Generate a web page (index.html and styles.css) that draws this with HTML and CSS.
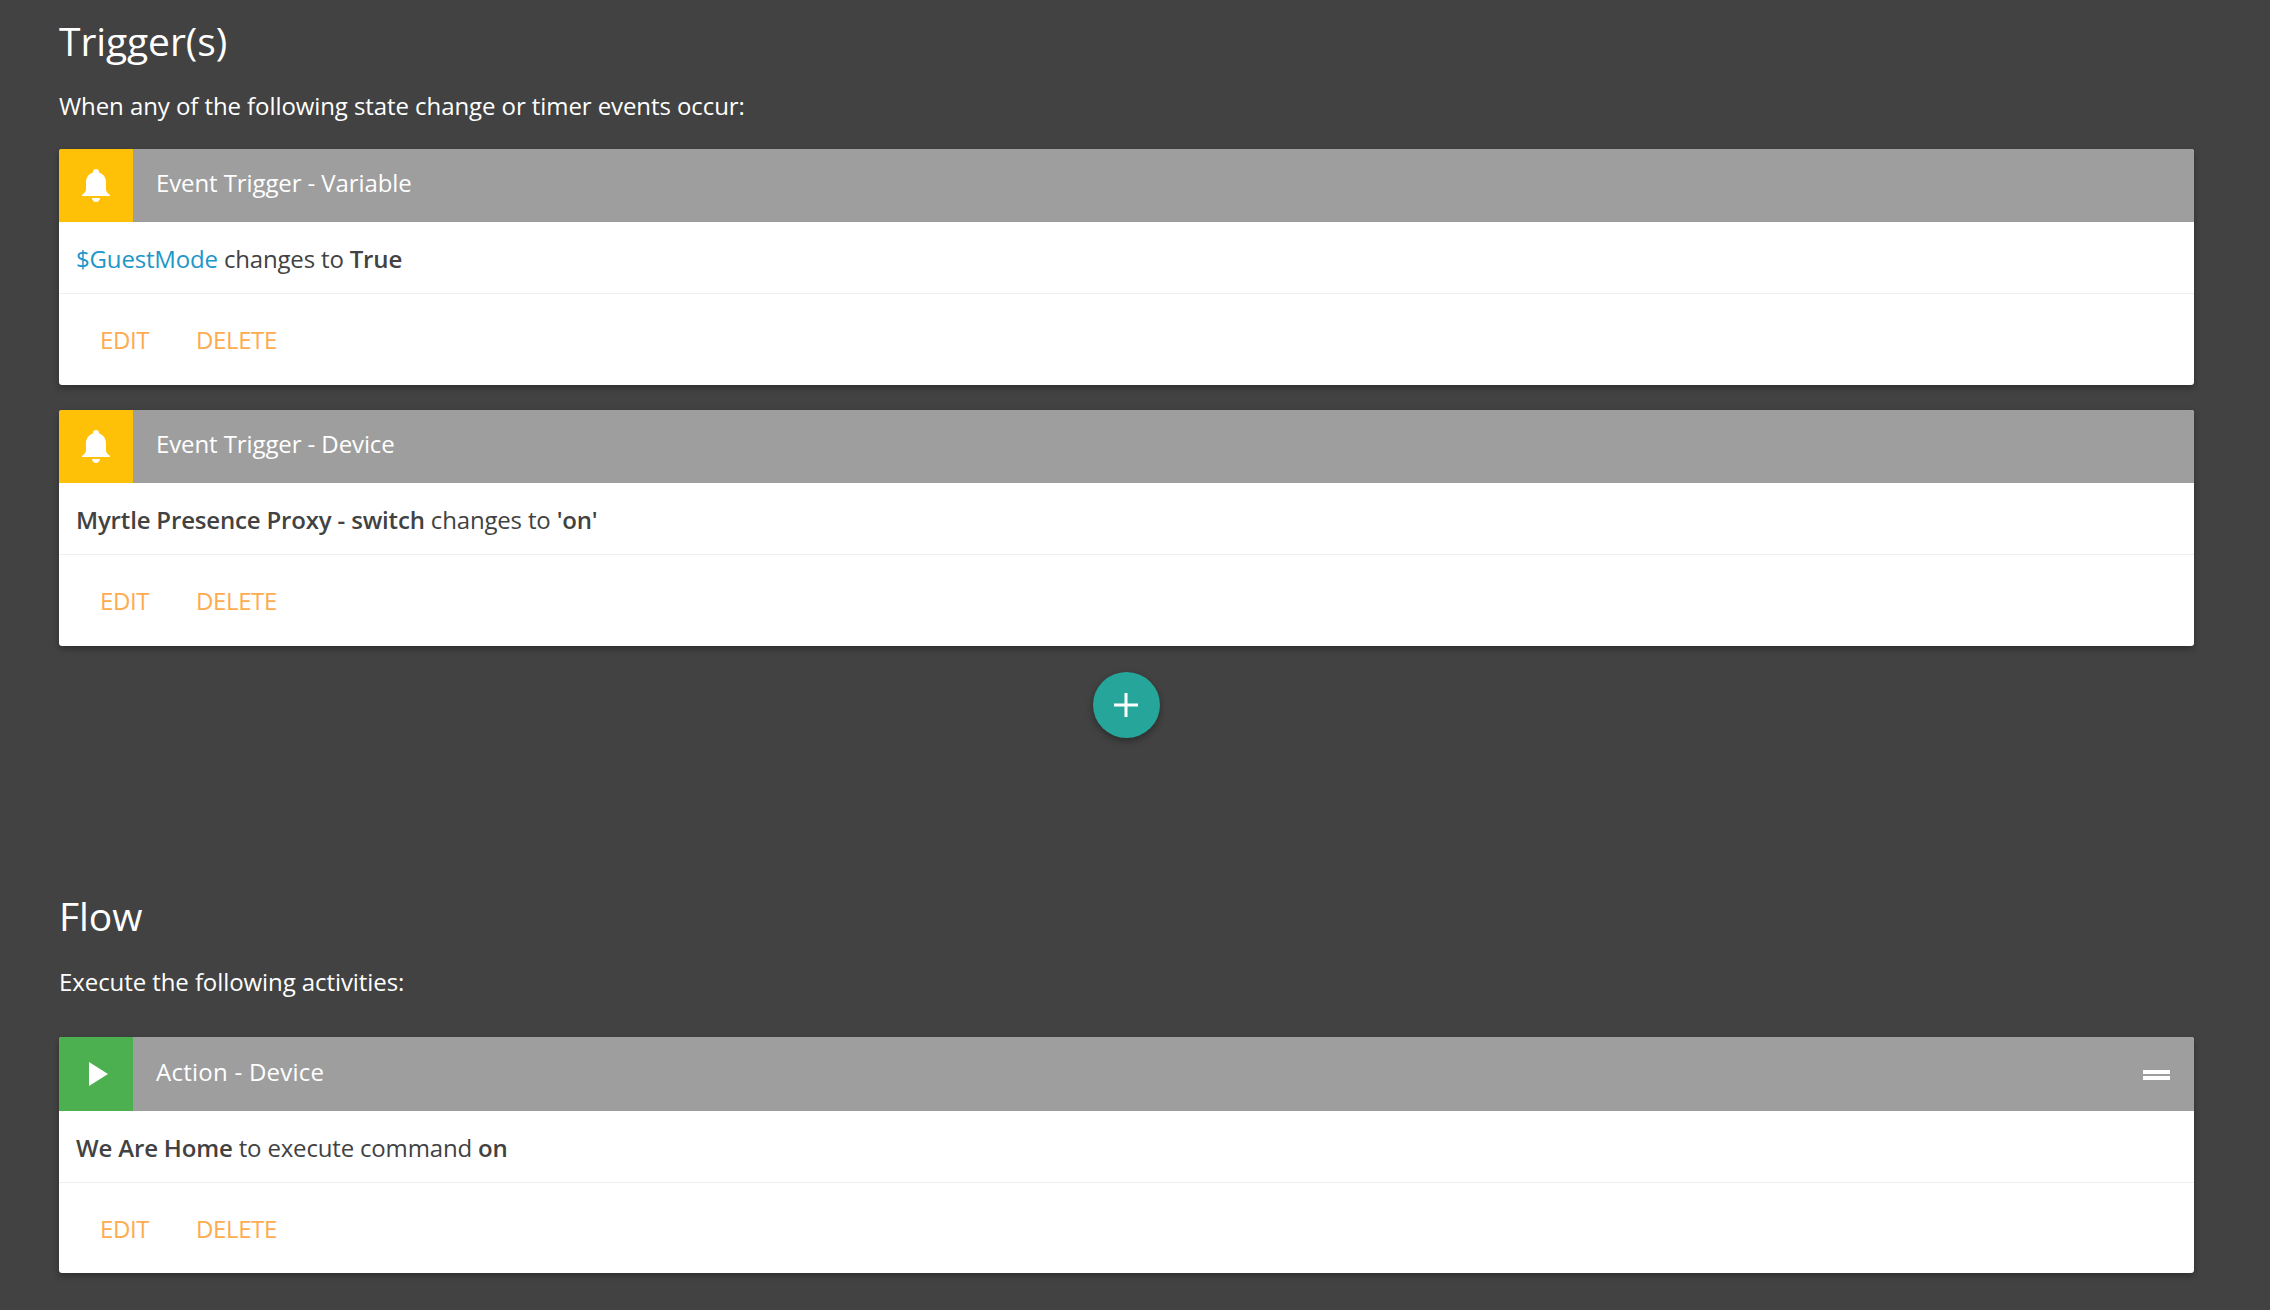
FILE: index.html
```html
<!DOCTYPE html>
<html lang="en">
<head>
<meta charset="utf-8">
<title>Rule</title>
<link rel="stylesheet" href="styles.css">
</head>
<body>
<main class="page">
  <section class="section triggers">
    <h2 class="title">Trigger(s)</h2>
    <p class="lead">When any of the following state change or timer events occur:</p>
    <div class="stack">
      <article class="card">
        <header class="card-head">
          <span class="badge badge-amber"><svg class="bell" viewBox="0 0 28 33"><path d="M14 0c1.700 0 3 1.200 3 2.800v.6c4.400 1.300 7 5 7 9.800v7.300c0 1.700 1.500 3.500 4 5.500v1H0v-1c2.500-2 4-3.800 4-5.500v-7.300c0-4.800 2.600-8.500 7-9.800v-.6C11 1.200 12.300 0 14 0z"/><path d="M10 29h8c0 2.200-1.800 4-4 4s-4-1.800-4-4z"/></svg></span>
          <span class="card-title">Event Trigger - Variable</span>
        </header>
        <div class="card-body"><span class="var">$GuestMode</span> changes to <b>True</b></div>
        <div class="card-actions"><a class="action">EDIT</a><a class="action">DELETE</a></div>
      </article>
      <article class="card">
        <header class="card-head">
          <span class="badge badge-amber"><svg class="bell" viewBox="0 0 28 33"><path d="M14 0c1.700 0 3 1.200 3 2.800v.6c4.400 1.300 7 5 7 9.800v7.300c0 1.700 1.500 3.500 4 5.500v1H0v-1c2.500-2 4-3.800 4-5.500v-7.300c0-4.800 2.600-8.500 7-9.800v-.6C11 1.200 12.300 0 14 0z"/><path d="M10 29h8c0 2.200-1.800 4-4 4s-4-1.800-4-4z"/></svg></span>
          <span class="card-title">Event Trigger - Device</span>
        </header>
        <div class="card-body"><b>Myrtle Presence Proxy - switch</b> changes to <b>'on'</b></div>
        <div class="card-actions"><a class="action">EDIT</a><a class="action">DELETE</a></div>
      </article>
    </div>
    <div class="fab-row">
      <button class="fab" aria-label="Add"><svg class="plus" viewBox="0 0 24 24"><path d="M10.500 0h3v10.500H24v3H13.500V24h-3V13.500H0v-3h10.500z"/></svg></button>
    </div>
  </section>
  <section class="section flow">
    <h2 class="title">Flow</h2>
    <p class="lead">Execute the following activities:</p>
    <article class="card">
      <header class="card-head card-head-tall">
        <span class="badge badge-green"><svg class="play" viewBox="0 0 19 24"><path d="M0 0l19 12L0 24z"/></svg></span>
        <span class="card-title">Action - Device</span>
        <span class="drag"></span>
      </header>
      <div class="card-body"><b>We Are Home</b> to execute command <b>on</b></div>
      <div class="card-actions"><a class="action">EDIT</a><a class="action">DELETE</a></div>
    </article>
  </section>
</main>
</body>
</html>
```
FILE: styles.css
```css
* { box-sizing: border-box; }
html, body { margin: 0; height: 100%; }
body {
  background: #424242;
  font-family: "Open Sans", "Noto Sans", sans-serif;
  color: #fff;
  overflow: hidden;
}
.page { padding: 0 76px 0 59px; }
.title {
  margin: 0;
  font-size: 39px;
  font-weight: 400;
  line-height: 52px;
  letter-spacing: -.1px;
}
.lead {
  margin: 0;
  font-size: 24px;
  line-height: 34px;
  letter-spacing: -.08px;
}
.triggers { padding-top: 15px; }
.triggers .lead { margin-top: 22px; margin-bottom: 26px; }
.stack { display: flex; flex-direction: column; gap: 25px; }
.card {
  background: #fff;
  border-radius: 3px;
  overflow: hidden;
  box-shadow: 0 3px 6px rgba(0,0,0,.3);
  color: #424242;
}
.card-head {
  display: flex;
  align-items: center;
  height: 73px;
  background: #9e9e9e;
  color: #fff;
}
.card-head-tall { height: 74px; }
.badge {
  flex: none;
  width: 74px;
  height: 100%;
  display: flex;
  align-items: center;
  justify-content: center;
}
.badge-amber { background: #ffc107; }
.badge-green { background: #4caf50; }
.bell { width: 28px; height: 33px; fill: #fff; }
.play { width: 19px; height: 24px; fill: #fff; margin-left: 5px; }
.card-title {
  margin-left: 23px;
  padding-bottom: 6px;
  font-size: 24px;
  letter-spacing: -.1px;
  flex: 1;
}
.card-head-tall .card-title { letter-spacing: .25px; }
.drag {
  width: 27px;
  height: 10px;
  margin-right: 24px;
  margin-top: 2px;
  border-top: 4px solid #fff;
  border-bottom: 4px solid #fff;
}
.card-body {
  height: 72px;
  padding: 3px 17px 0;
  display: flex;
  align-items: center;
  white-space: pre-wrap;
  font-size: 24px;
  line-height: 34px;
  letter-spacing: -.17px;
  border-bottom: 1px solid #eee;
}
.card-body b { font-weight: 600; }
.var { color: #2196c9; }
.card-actions {
  height: 91px;
  padding: 0 0 0 41px;
  display: flex;
  align-items: center;
  gap: 47px;
}
.flow .card-actions { height: 90px; }
.action {
  font-size: 24px;
  letter-spacing: -.4px;
  color: #ffab4f;
}
.fab-row { display: flex; justify-content: center; margin-top: 26px; padding-right: 1px; }
.fab {
  width: 67px;
  height: 66px;
  padding: 0;
  border: 0;
  border-radius: 50%;
  background: #26a69a;
  box-shadow: 0 3px 7px rgba(0,0,0,.35);
  display: flex;
  align-items: center;
  justify-content: center;
}
.plus { width: 24px; height: 24px; fill: #fff; }
.flow { margin-top: 152px; }
.flow .lead { margin-top: 23px; margin-bottom: 38px; }
```
